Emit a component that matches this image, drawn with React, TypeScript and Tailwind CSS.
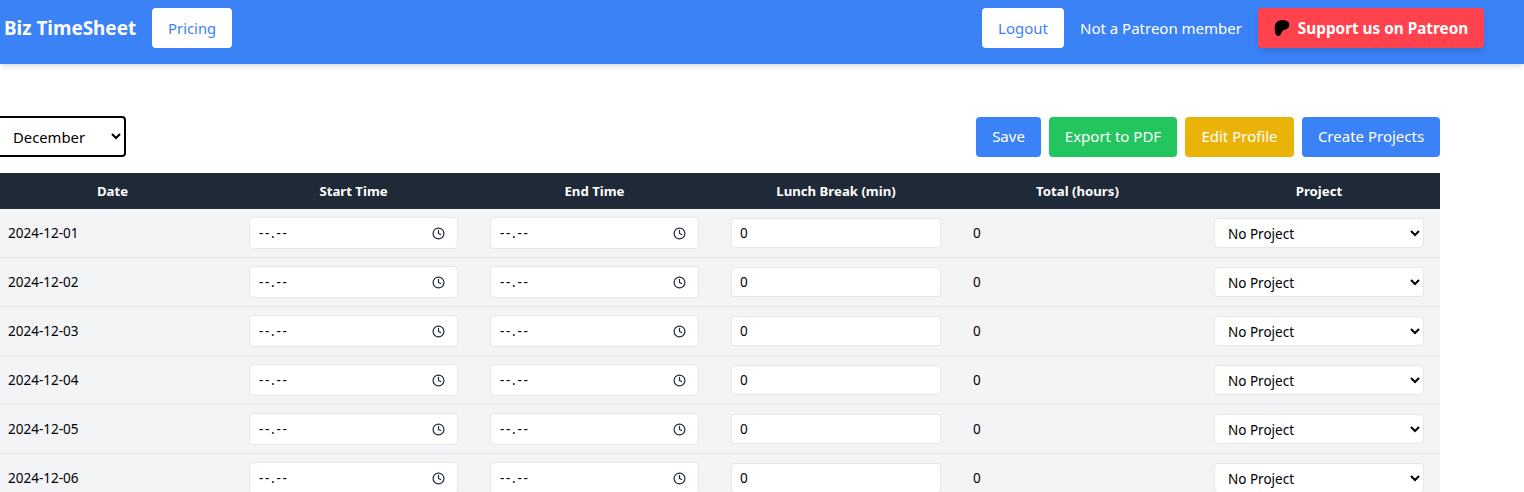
import { Clock } from "lucide-react";
import { FaPatreon } from "react-icons/fa6";

const days = Array.from({ length: 31 }, (_, i) => `2024-12-${String(i + 1).padStart(2, "0")}`);

const TimeField = () => (
  <div className="flex h-8 w-full items-center justify-between rounded border border-gray-200 bg-white pl-[9px] pr-[12px] text-[13.5px]">
    <span className="tracking-[1.7px]">--.--</span>
    <Clock size={13} strokeWidth={2.2} className="text-gray-800" />
  </div>
);

const App = () => {
  const columns = [
    { label: "Date", width: "w-[241px]" },
    { label: "Start Time", width: "w-[241px]" },
    { label: "End Time", width: "w-[241px]" },
    { label: "Lunch Break (min)", width: "w-[242px]" },
    { label: "Total (hours)", width: "w-[241px]" },
    { label: "Project", width: "w-[242px]" },
  ];

  return (
    <div className="h-screen overflow-hidden bg-white font-['Noto_Sans',sans-serif] text-black">
      {/* Navbar */}
      <nav className="relative flex h-16 items-start justify-between bg-[#3b82f6] pl-1 pr-10 pt-2 shadow-md">
        <div className="flex items-center gap-4">
          <span className="text-[18.9px] font-bold text-white">Biz TimeSheet</span>
          <button className="h-10 w-20 rounded bg-white text-[14.8px] text-[#3b82f6]">Pricing</button>
        </div>
        <div className="flex items-center gap-4">
          <button className="h-10 w-[82px] rounded bg-white text-[15px] text-[#3b82f6]">Logout</button>
          <span className="text-[15px] text-white">Not a Patreon member</span>
          <button className="flex h-10 w-[226px] items-center justify-center gap-2 rounded bg-[#ff424d] text-[15.3px] font-bold text-white shadow-md">
            <FaPatreon size={16} className="text-black" />
            Support us on Patreon
          </button>
        </div>
      </nav>

      <main className="-ml-2 w-[1448px] pt-[52px]">
        {/* Toolbar */}
        <div className="mb-4 flex items-center justify-between">
          <select className="h-[41px] w-[134px] rounded border-2 border-black bg-white pl-[15px] text-[14.8px]">
            <option>December</option>
          </select>
          <div className="flex gap-2 text-[15px] text-white">
            <button className="h-10 w-[65px] rounded bg-[#3b82f6]">Save</button>
            <button className="h-10 w-[128px] rounded bg-[#22c55e]">Export to PDF</button>
            <button className="h-10 w-[109px] rounded bg-[#eab308]">Edit Profile</button>
            <button className="h-10 w-[138px] rounded bg-[#3b82f6]">Create Projects</button>
          </div>
        </div>

        <table className="w-full table-fixed text-[13.5px]">
          <thead className="bg-[#1f2937] text-white">
            <tr>
              {columns.map((column) => (
                <th key={column.label} className={`h-9 px-4 pt-px text-center text-[13.2px] font-bold ${column.width}`}>
                  {column.label}
                </th>
              ))}
            </tr>
          </thead>
          <tbody className="bg-[#f3f4f6]">
            {days.map((day) => (
              <tr key={day} className="border-b border-[#e5e7eb]">
                <td className="px-4 py-2">{day}</td>
                <td className="px-4 py-2">
                  <TimeField />
                </td>
                <td className="px-4 py-2">
                  <TimeField />
                </td>
                <td className="px-4 py-2">
                  <input
                    defaultValue="0"
                    className="block h-[30px] w-full rounded border border-[#e5e7eb] bg-white pl-2 text-[13.5px]"
                  />
                </td>
                <td className="px-4 py-2">0</td>
                <td className="px-4 py-2">
                  <select className="block h-[30px] w-full rounded border border-[#e5e7eb] bg-white pl-[9px] pt-px text-[13.5px]">
                    <option>No Project</option>
                  </select>
                </td>
              </tr>
            ))}
          </tbody>
        </table>
      </main>
    </div>
  );
};

export default App;
